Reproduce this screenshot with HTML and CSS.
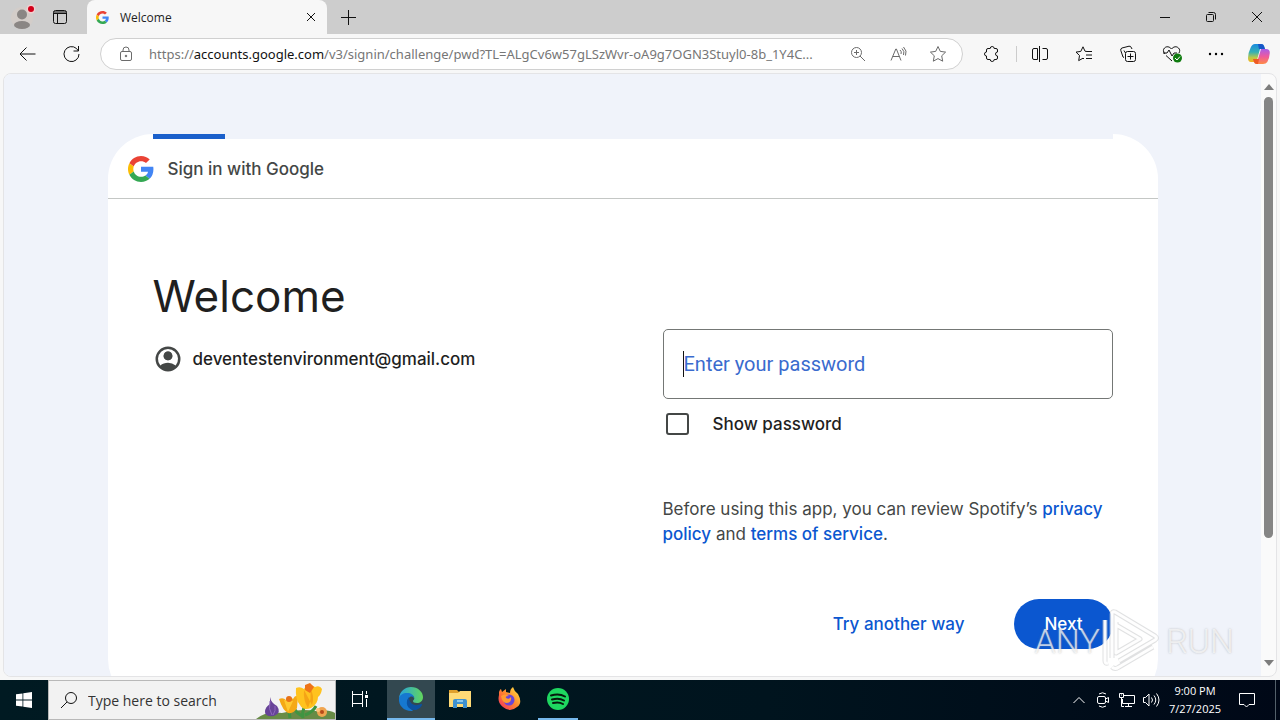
FILE: index.html
```html
<!DOCTYPE html>
<html lang="en">
<head>
  <meta charset="utf-8">
  <title>Welcome</title>
  <link rel="stylesheet" href="styles.css">
</head>
<body>
  <!-- tab strip -->
  <header class="tabs">
    <button class="tab-btn profile" aria-label="Profile">
      <svg width="32" height="32" viewBox="0 0 32 32"><circle cx="15" cy="17" r="11" fill="#d3cdc9"/><circle cx="15" cy="13.500" r="5" fill="#8a8684"/><ellipse cx="15" cy="24" rx="8" ry="4" fill="#8a8684"/><circle cx="24" cy="8" r="4.500" fill="#f1cfcf"/><circle cx="24" cy="8" r="3" fill="#d2001a"/></svg>
    </button>
    <button class="tab-btn" aria-label="Tab actions">
      <svg class="line" width="16" height="16" viewBox="0 0 16 16"><rect x="1.500" y="1.500" width="13" height="13" rx="2"/><path d="M1.500 3h13M1.500 4.500h13M5.500 4v10.500"/></svg>
    </button>
    <div class="tab">
      <svg width="13" height="13" viewBox="0 0 48 48"><use href="#g"/></svg>
      <span class="tab-title">Welcome</span>
      <button class="tab-close" aria-label="Close tab">
        <svg class="line" width="10" height="10" viewBox="0 0 10 10"><path d="M1 1l8 8M9 1l-8 8"/></svg>
      </button>
    </div>
    <button class="tab-btn new-tab" aria-label="New tab">
      <svg class="line" width="15" height="15" viewBox="0 0 15 15"><path d="M7.500 0v15M0 7.500h15"/></svg>
    </button>
    <div class="window-btns">
      <button aria-label="Minimize"><svg class="line" width="10" height="10" viewBox="0 0 10 10"><path d="M0 5.500h10"/></svg></button>
      <button aria-label="Restore"><svg class="line" width="12" height="12" viewBox="0 0 12 12"><rect x="1.500" y="3.500" width="7" height="7" rx="1"/><path d="M3.500 1.500h5a2 2 0 0 1 2 2v5"/></svg></button>
      <button aria-label="Close"><svg class="line" width="12" height="12" viewBox="0 0 12 12"><path d="M1 1l10 10M11 1L1 11"/></svg></button>
    </div>
  </header>

  <!-- toolbar -->
  <nav class="toolbar">
    <button class="tool" aria-label="Back"><svg class="line" width="18" height="16" viewBox="0 0 18 16"><path d="M17.500 8H2M8.500 1.500L2 8 8.500 14.500"/></svg></button>
    <button class="tool" aria-label="Refresh"><svg class="line" width="18" height="18" viewBox="0 0 18 18"><path d="M17 9A7.500 7.500 0 1 1 14.500 3.500L16.500 6M16.500 1v5h-5"/></svg></button>
    <div class="address">
      <svg class="line grey" width="14" height="16" viewBox="0 0 14 16"><rect x="1.500" y="5.500" width="11" height="9" rx="1.500"/><path d="M4 5.500V4a3 3 0 0 1 6 0v1.500"/><circle cx="7" cy="10" r=".8" fill="#666"/></svg>
      <div class="url" role="textbox" aria-label="Address">https://<b>accounts.google.com</b>/v3/signin/challenge/pwd?TL=ALgCv6w57gLSzWvr-oA9g7OGN3Stuyl0-8b_1Y4C...</div>
      <button aria-label="Zoom"><svg class="line grey" width="16" height="16" viewBox="0 0 16 16"><circle cx="6.500" cy="6.500" r="5"/><path d="M10 10l5 5M4 6.500h5M6.500 4v5"/></svg></button>
      <button aria-label="Read aloud"><svg class="line grey" width="17" height="16" viewBox="0 0 17 16"><path d="M1 14.500L5.800 3h.6L11 14.500M2.800 10.500h6.600M10 4q2 1.500 1 4M12 2.500q3 3 1.500 6.500M13.500 1q4 4 2 8.500"/></svg></button>
      <button aria-label="Add to favorites"><svg class="line grey" width="18" height="18" viewBox="0 0 18 18"><path d="M9 1.500l2.300 4.900 5.300.7-3.900 3.700 1 5.400L9 13.600l-4.700 2.600 1-5.400L1.400 7.100l5.300-.7z"/></svg></button>
    </div>
    <button class="tool puzzle" aria-label="Extensions"><svg class="line" width="18" height="18" viewBox="0 0 18 18"><path d="M5 3.500h2.200a2 2 0 0 1 4 0H13q1.500 0 1.500 1.500v2a2 2 0 0 0 0 4v2q0 1.500-1.500 1.500h-1.800a2 2 0 0 1-4 0H5q-1.500 0-1.500-1.500v-2a2 2 0 0 1 0-4V5q0-1.500 1.500-1.500z"/></svg></button>
    <span class="divider"></span>
    <button class="tool" aria-label="Split screen"><svg class="line" width="18" height="18" viewBox="0 0 18 18"><path d="M6.500 3.500H3q-1.500 0-1.500 1.500v8q0 1.500 1.500 1.500h3.500zM11.500 3.500H15q1.500 0 1.500 1.500v8q0 1.500-1.500 1.500h-3.500M8.500 1v16"/></svg></button>
    <button class="tool" aria-label="Favorites"><svg class="line" width="18" height="18" viewBox="0 0 18 18"><path d="M12 6.500l-2-.3-2-4.400-2.200 4.600-4.800.7 3.500 3.400-.8 5.100L8 13.200l1 .6M12 6.500h5M11 10h6M11 13.500h6"/></svg></button>
    <button class="tool" aria-label="Collections"><svg class="line" width="18" height="18" viewBox="0 0 18 18"><rect x="6.500" y="6.500" width="10" height="10" rx="2"/><path d="M11.500 8.500v6M8.500 11.500h6M4 12L1.800 5.500Q1.300 3.500 3 3l7-1.800q1.800-.4 2.500 1.800L13 4M4 12l1 .5M6.500 8L5 5.500"/></svg></button>
    <button class="tool" aria-label="Browser essentials"><svg class="line" width="20" height="18" viewBox="0 0 20 18"><path d="M3 9C1 6.500 1 4.500 2.500 3 4.500 1 7.500 1.500 9.500 4c2-2.500 5-3 7-1 1.500 1.500 1.500 3 .5 5M1 8h4l2-3 3 6 2-3h3M4 10.500l6 5.500"/><circle cx="15.500" cy="13" r="4.500" fill="#107c10" stroke="none"/><path d="M13 13l2 2 3-3.500" stroke="#fff"/></svg></button>
    <button class="tool" aria-label="Settings and more"><svg width="16" height="4" viewBox="0 0 16 4"><circle cx="2" cy="2" r="1.200"/><circle cx="8" cy="2" r="1.200"/><circle cx="14" cy="2" r="1.200"/></svg></button>
    <button class="tool" aria-label="Copilot">
      <svg width="24" height="24" viewBox="0 0 24 24">
        <defs>
          <linearGradient id="cpA" x1="0" y1="0" x2="0" y2="1"><stop offset="0" stop-color="#1a8be0"/><stop offset=".45" stop-color="#35b0b5"/><stop offset=".75" stop-color="#b9c84a"/><stop offset="1" stop-color="#f6b31c"/></linearGradient>
          <linearGradient id="cpB" x1="0" y1="0" x2="0" y2="1"><stop offset="0" stop-color="#a95de8"/><stop offset=".5" stop-color="#ee5a9d"/><stop offset="1" stop-color="#ff8a45"/></linearGradient>
        </defs>
        <path d="M14 2q2.500 0 3 2l1 3h-5l-3 11q-1 2-3 2H4q-3 0-3-4 0-5 2.500-10Q5 2 8 2z" fill="url(#cpA)"/>
        <path d="M11 2h3q2.500 0 3 2l1 3h-6z" fill="#1757c8"/>
        <path d="M10 22q-2.500 0-3-2l-1-3h5l3-10h5q4 0 3.800 4-.3 5-2.500 9Q19 22 16 22z" fill="url(#cpB)"/>
        <path d="M10 22q-2.500 0-3-2l-1-3h6l-1 5z" fill="#ee5b25"/>
      </svg>
    </button>
  </nav>

  <!-- page -->
  <div class="frame">
    <main class="viewport">
      <div class="card">
        <div class="progress"><div class="progress-bar"></div></div>
        <div class="brand">
          <svg width="26" height="26" viewBox="0 0 48 48"><g id="g"><path fill="#EA4335" d="M24 9.500c3.540 0 6.710 1.220 9.210 3.600l6.850-6.850C35.900 2.380 30.470 0 24 0 14.620 0 6.510 5.380 2.560 13.220l7.980 6.190C12.430 13.720 17.740 9.500 24 9.500z"/><path fill="#4285F4" d="M46.980 24.550c0-1.570-.15-3.090-.38-4.550H24v9.020h12.940c-.58 2.960-2.260 5.480-4.780 7.180l7.730 6c4.510-4.180 7.090-10.360 7.090-17.650z"/><path fill="#FBBC05" d="M10.530 28.590c-.48-1.450-.76-2.990-.76-4.590s.27-3.140.76-4.590l-7.980-6.190C.92 16.460 0 20.120 0 24c0 3.880.92 7.540 2.560 10.780l7.970-6.190z"/><path fill="#34A853" d="M24 48c6.480 0 11.930-2.130 15.890-5.810l-7.730-6c-2.150 1.450-4.920 2.300-8.160 2.300-6.260 0-11.570-4.220-13.470-9.910l-7.980 6.190C6.510 42.620 14.620 48 24 48z"/></g></svg>
          <span>Sign in with Google</span>
        </div>
        <div class="content">
          <section class="intro">
            <h1>Welcome</h1>
            <div class="account">
              <svg width="30" height="30" viewBox="0 0 24 24" fill="#444746"><path d="M12 2a10 10 0 1 0 0 20 10 10 0 0 0 0-20zM5.860 17.120A8 8 0 1 1 18.140 17.120 9.950 9.950 0 0 0 12 15c-2.320 0-4.450.8-6.140 2.120zM12 6a3.500 3.500 0 1 1 0 7 3.500 3.500 0 0 1 0-7z" fill-rule="evenodd"/><circle cx="12" cy="9.500" r="3.500"/></svg>
              <span>deventestenvironment@gmail.com</span>
            </div>
          </section>
          <form class="signin">
            <div class="field">
              <input type="password" id="password">
              <label for="password">Enter your password</label>
            </div>
            <div class="show">
              <input type="checkbox" id="show">
              <label for="show">Show password</label>
            </div>
            <p class="terms">Before using this app, you can review Spotify’s <a href="#">privacy policy</a> and <a href="#">terms of service</a>.</p>
            <div class="actions">
              <button type="button" class="try">Try another way</button>
              <button type="button" class="next">Next</button>
            </div>
          </form>
        </div>
      </div>
    </main>
    <div class="scrollbar">
      <svg width="10" height="6" viewBox="0 0 10 6"><path d="M5 0l5 6H0z"/></svg>
      <div class="thumb"></div>
      <svg width="10" height="6" viewBox="0 0 10 6"><path d="M0 0h10L5 6z"/></svg>
    </div>
  </div>

  <div class="watermark">
    <span>ANY</span>
    <svg width="62" height="66" viewBox="0 0 62 66">
      <path class="edge" d="M10 50V6q0-3 3-2l40 24q3 2 0 4L17 53M14 14v31l24-14-24-14M3 12v41q0 3 3 2M10 59q3 3 7 0l34-20"/>
      <path class="face" d="M10 50V6q0-3 3-2l40 24q3 2 0 4L17 53M14 14v31l24-14-24-14M3 12v41q0 3 3 2M10 59q3 3 7 0l34-20"/>
    </svg>
    <span>RUN</span>
  </div>

  <!-- taskbar -->
  <footer class="taskbar">
    <button class="app start" aria-label="Start"><svg width="16" height="16" viewBox="0 0 16 16" fill="#fff"><path d="M0 2.300L6.500 1.400v6.200H0zM7.300 1.300L16 0v7.600H7.300zM0 8.400h6.500v6.200L0 13.700zM7.300 8.400H16V16l-8.700-1.300z"/></svg></button>
    <div class="search">
      <svg class="line" width="18" height="18" viewBox="0 0 18 18"><circle cx="11" cy="7" r="5.500"/><path d="M7 11l-6 6"/></svg>
      <input type="text" aria-label="Search" placeholder="Type here to search">
      <svg width="79" height="38" viewBox="0 0 79 38">
        <path d="M0 38q10-8 26-6 18-5 34-2 12-2 19 2v6z" fill="#688b46"/>
        <path d="M14 16q1 6 7 9 5 7-3 10-9 1-9-4 0-5 5-8z" fill="#674398"/><path d="M14 20q-2 8 2 14M19 25q1 5-2 9" stroke="#9069bd" fill="none"/>
        <path d="M48 26q-2 6-1 11M33 30l1 7M49 34q8-3 11-9M46 35q-7-4-8-9" stroke="#3f9441" stroke-width="3" fill="none"/>
        <path d="M23 18q4-2 7 1 4-5 7-1 2-4 5-3l-1 12q-3 6-9 5-5-2-9-14z" fill="#f5a916"/><path d="M28 19l4 12 5-11" fill="#ffc931"/><circle cx="33" cy="18" r="3" fill="#e77219"/>
        <path d="M40 7q4-2 8 1 4-7 11-2 5-2 7 2-1 6-4 8 0 7-7 11-8 3-11-3-5-6-4-17z" fill="#ffc31f"/><path d="M48 9q-1 10 4 18 4-9 2-20 5 8 2 17" fill="#f5a416"/><path d="M49 4l5-2 4 4-4 6-5-3z" fill="#ee7319"/>
        <circle cx="66" cy="31" r="5" fill="#f0a550"/><circle cx="66" cy="31" r="2" fill="#b84a19"/><circle cx="62" cy="29" r="2" fill="#ffc47c"/>
      </svg>
    </div>
    <button class="app" aria-label="Task view"><svg class="line white" width="18" height="18" viewBox="0 0 18 18"><path d="M1.500 1v3.500h10V1M1.500 17v-3.500h10V17M1.500 4.500h10v9h-10zM15.500 1v3M15.500 9v8"/><path d="M14 5h3v3h-3z" fill="#fff" stroke="none"/></svg></button>
    <div class="apps">
      <button class="app active running" aria-label="Edge">
        <svg width="26" height="26" viewBox="0 0 26 26">
          <defs><linearGradient id="edA" x1="0" y1="0" x2="1" y2="0"><stop offset="0" stop-color="#26a3df"/><stop offset="1" stop-color="#62d65c"/></linearGradient></defs>
          <path d="M1 12C2 5 7 1 13 1c7 0 12 5 12 10 0 4-3 6-6 6-3 0-4-1-4-2s2-1 1-4c-1-2-4-3-7-2-4 0-7 2-8 3z" fill="url(#edA)"/>
          <path d="M1 12c1-3 4-5 8-5 4 0 7 2 7 5-1-1-2-2-4-1-4 2-3 8 1 12l2 2C7 26 0 20 1 12z" fill="#1678d0"/>
          <path d="M11 11c-5 6-1 14 7 13 3-1 5-3 6-5 0-1 0-1-1-1-6 3-12 0-12-7z" fill="#0c51a0"/>
        </svg>
      </button>
      <button class="app" aria-label="File Explorer"><svg width="22" height="20" viewBox="0 0 22 20"><path d="M0 1h8l2 2h11v4H0z" fill="#e0a02c"/><path d="M0 4h9l2-2h11v16H0z" fill="#ffda76"/><path d="M4 19v-7q0-2 2-2h10q2 0 2 2v7h-4v-4H8v4z" fill="#3f91cf"/><path d="M8 12h6" stroke="#8cc9ee" stroke-width="2"/></svg></button>
      <button class="app" aria-label="Firefox">
        <svg width="24" height="24" viewBox="0 0 24 24">
          <defs><linearGradient id="ffA" x1="1" y1="0" x2="0" y2="1"><stop offset="0" stop-color="#ffee46"/><stop offset=".5" stop-color="#ff842d"/><stop offset="1" stop-color="#f02863"/></linearGradient></defs>
          <path d="M2 5q1-3 2-3l1 3 4-3v3l4 1q0-4 3-6 1 4 5 7 5 9-1 13-7 6-14 0-6-4-4-12z" fill="url(#ffA)"/>
          <circle cx="12" cy="13" r="5.500" fill="#6946d8"/><path d="M4 9q4-3 8 0-4 0-3 2 3 2 5-1 1 6-5 6Q5 15 4 9z" fill="#ff9c30"/>
        </svg>
      </button>
      <button class="app running" aria-label="Spotify"><svg width="24" height="24" viewBox="0 0 24 24"><circle cx="12" cy="12" r="11" fill="#1ed760"/><path d="M5 8.500q8-2.500 14 1M6 12.500q7-2 12 1M7 16q6-1.500 10 1" stroke="#06190d" stroke-width="2" stroke-linecap="round" fill="none"/></svg></button>
    </div>
    <div class="tray">
      <button aria-label="Show hidden icons"><svg class="line white" width="12" height="8" viewBox="0 0 12 8"><path d="M.5 7L6 1.500 11.500 7"/></svg></button>
      <button aria-label="Meet now"><svg class="line white" width="14" height="18" viewBox="0 0 14 18"><rect x="1.500" y="5.500" width="8" height="7" rx="1.500"/><path d="M9.500 8l3-1.500v5L9.500 10M3 3q3.500-2.500 7 0M3 15q3.500 2.500 7 0"/></svg></button>
      <button aria-label="Network"><svg class="line white" width="18" height="16" viewBox="0 0 18 16"><path d="M5 3.500h11.500v8h-12V7M7 14.500h7M10.500 11.500v3M1.500 1.500h4v4h-4zM3.500 5.500v9H6M3 3h1"/></svg></button>
      <button aria-label="Volume"><svg class="line white" width="18" height="16" viewBox="0 0 18 16"><path d="M1.500 5.500h2L7 2v12l-3.500-3.500h-2zM9.500 5.500q2 2.500 0 5M12 3.500q3.500 4.500 0 9M14.500 1.500q5 6.500 0 13"/></svg></button>
      <div class="clock"><div>9:00 PM</div><div>7/27/2025</div></div>
      <button class="notify" aria-label="Notifications"><svg class="line white" width="18" height="18" viewBox="0 0 18 18"><path d="M1.500 2.500h15v11H11L8.500 16 6 13.500H1.500z"/></svg></button>
      <span class="desktop-peek"></span>
    </div>
  </footer>
</body>
</html>
```
FILE: styles.css
```css
* {
  box-sizing: border-box;
}

body {
  margin: 0;
  height: 100vh;
  display: flex;
  flex-direction: column;
  overflow: hidden;
  background: #f7f7f7;
  font-family: "Open Sans", sans-serif;
  font-size: 12px;
  color: #1f1f1f;
}

button {
  display: flex;
  align-items: center;
  justify-content: center;
  flex: none;
  padding: 0;
  border: 0;
  background: none;
  font: inherit;
  color: inherit;
}

svg {
  flex: none;
}

.line {
  fill: none;
  stroke: #111;
  stroke-width: 1;
}

.grey {
  stroke: #6b6b6b;
}

.white {
  stroke: #fff;
}

/* tabs */
.tabs {
  display: flex;
  flex: none;
  height: 34px;
  padding-left: 7px;
  background: #cdcdcd;
}

.tab-btn {
  width: 32px;
}

.profile {
  width: 32px;
  margin-right: 5px;
}

.tab {
  display: flex;
  align-items: center;
  width: 240px;
  margin-left: 11px;
  padding: 0 10px 0 9px;
  border-radius: 8px 8px 0 0;
  background: #f7f7f7;
}

.tab-title {
  flex: 1;
  margin-left: 11px;
}

.tab-close {
  width: 12px;
  height: 20px;
}

.new-tab {
  width: 43px;
}

.window-btns {
  display: flex;
  margin-left: auto;
}

.window-btns button {
  width: 46px;
}

/* toolbar */
.toolbar {
  display: flex;
  align-items: center;
  flex: none;
  height: 39px;
  padding-left: 5px;
}

.tool {
  width: 44px;
  height: 32px;
}

.tool:last-child {
  width: 42px;
}

.address {
  display: flex;
  align-items: center;
  flex: 1;
  min-width: 0;
  height: 32px;
  margin: 0 7px;
  padding: 0 4px 0 18px;
  border: 1px solid #d0d0d0;
  border-radius: 16px;
  background: #fff;
}

.address button {
  width: 40px;
}

.url {
  flex: 1;
  min-width: 0;
  margin-left: 16px;
  overflow: hidden;
  white-space: nowrap;
  font-family: "Noto Sans", sans-serif;
  font-size: 13px;
  color: #767676;
}

.url b {
  font-weight: 400;
  color: #111;
}

.divider {
  width: 1px;
  height: 16px;
  margin: 0 1px 0 2px;
  background: #ccc;
}

/* page */
.frame {
  display: flex;
  flex: 1;
  min-height: 0;
  margin: 0 3px 3px;
  border: 1px solid #e4e4e6;
  border-radius: 8px;
  overflow: hidden;
  background: #fafafa;
}

.viewport {
  flex: 1;
  overflow: hidden;
  padding-top: 60px;
  background: #f0f3fa;
  font-family: Inter, sans-serif;
  font-size: 17px;
}

.card {
  max-width: 1050px;
  min-height: 570px;
  margin: 0 auto;
  border-radius: 45px;
  background: #fff;
}

.progress {
  height: 5px;
  margin: 0 45px;
  background: #f0f3fa;
}

.progress-bar {
  width: 72px;
  height: 5px;
  background: #1b60cb;
}

.brand {
  display: flex;
  align-items: center;
  gap: 14px;
  height: 60px;
  padding-left: 20px;
  border-bottom: 1px solid #c4c7c5;
  font-weight: 500;
  color: #444746;
}

.content {
  display: grid;
  grid-template-columns: 1fr 1fr;
  gap: 60px;
  padding: 69px 45px 45px;
}

h1 {
  margin: 0;
  font-size: 44px;
  font-weight: 400;
  line-height: 56px;
}

.account {
  display: flex;
  align-items: center;
  gap: 10px;
  margin-top: 20px;
  font-weight: 500;
}

.signin {
  padding-top: 61px;
}

.field {
  position: relative;
}

.field input {
  display: block;
  width: 100%;
  height: 70px;
  padding: 0 19px;
  border: 1px solid #747775;
  border-radius: 5px;
  background: #fff;
  outline: 0;
}

.field label {
  position: absolute;
  left: 20px;
  top: 22px;
  border-left: 1px solid #111;
  font-family: Roboto, sans-serif;
  font-size: 20px;
  line-height: 26px;
  color: #3a6bce;
}

.show {
  display: flex;
  align-items: center;
  gap: 24px;
  margin-top: 10px;
  padding-left: 3px;
  height: 30px;
  font-weight: 500;
}

.show input {
  appearance: none;
  width: 23px;
  height: 22px;
  margin: 0;
  border: 2px solid #444746;
  border-radius: 3px;
}

.terms {
  margin: 58px 0 0;
  line-height: 25px;
  color: #444746;
}

a {
  color: #0b57d0;
  font-weight: 500;
  text-decoration: none;
}

.actions {
  display: flex;
  justify-content: flex-end;
  gap: 30px;
  margin-top: 52px;
  font-weight: 500;
}

.try {
  height: 50px;
  padding: 0 20px;
  color: #0b57d0;
}

.next {
  height: 50px;
  padding: 0 30px;
  border-radius: 25px;
  background: #0b57d0;
  color: #fff;
}

.scrollbar {
  display: flex;
  flex-direction: column;
  align-items: center;
  width: 15px;
  padding: 10px 0;
  fill: #7d7d7d;
}

.thumb {
  width: 9px;
  height: 441px;
  margin: 7px 0 auto;
  border-radius: 5px;
  background: #858585;
}

.watermark {
  position: absolute;
  right: 46px;
  bottom: 46px;
  display: flex;
  align-items: center;
  gap: 2px;
  font-family: Roboto, sans-serif;
  font-size: 34px;
  font-weight: 300;
  color: #ffffffb0;
  text-shadow: 0 0 2px #8888;
  pointer-events: none;
}

.watermark svg {
  fill: none;
  stroke-linejoin: round;
}

.watermark .edge {
  stroke: #c8c9cc90;
  stroke-width: 5;
}

.watermark .face {
  stroke: #fffffff0;
  stroke-width: 3;
}

/* taskbar */
.taskbar {
  display: flex;
  flex: none;
  height: 40px;
  background: linear-gradient(90deg, #001a22, #00141e 60%, #000817);
  color: #fff;
}

.app {
  width: 48px;
  border-bottom: 2px solid transparent;
}

.start {
  border: 0;
}

.search {
  display: flex;
  align-items: center;
  width: 288px;
  padding-left: 11px;
  border: 1px solid #b8b8b8;
  background: #f2f2f2;
}

.search input {
  flex: 1;
  min-width: 0;
  margin-left: 10px;
  padding: 0;
  border: 0;
  background: none;
  font: 14px "Open Sans", sans-serif;
}

.search input::placeholder {
  color: #333;
}

.apps {
  display: flex;
  gap: 1px;
  margin-left: 3px;
}

.active {
  background: #334850;
}

.running {
  border-color: #76b9ed;
}

.running:last-child {
  width: 40px;
  margin-left: 4px;
}

.tray {
  display: flex;
  margin-left: auto;
}

.tray button {
  width: 24px;
}

.clock {
  width: 64px;
  padding-top: 2px;
  text-align: center;
  font-size: 11px;
  line-height: 18px;
}

.tray .notify {
  width: 40px;
}

.desktop-peek {
  width: 5px;
  margin-left: 8px;
  border-left: 1px solid #53606a;
}
```
